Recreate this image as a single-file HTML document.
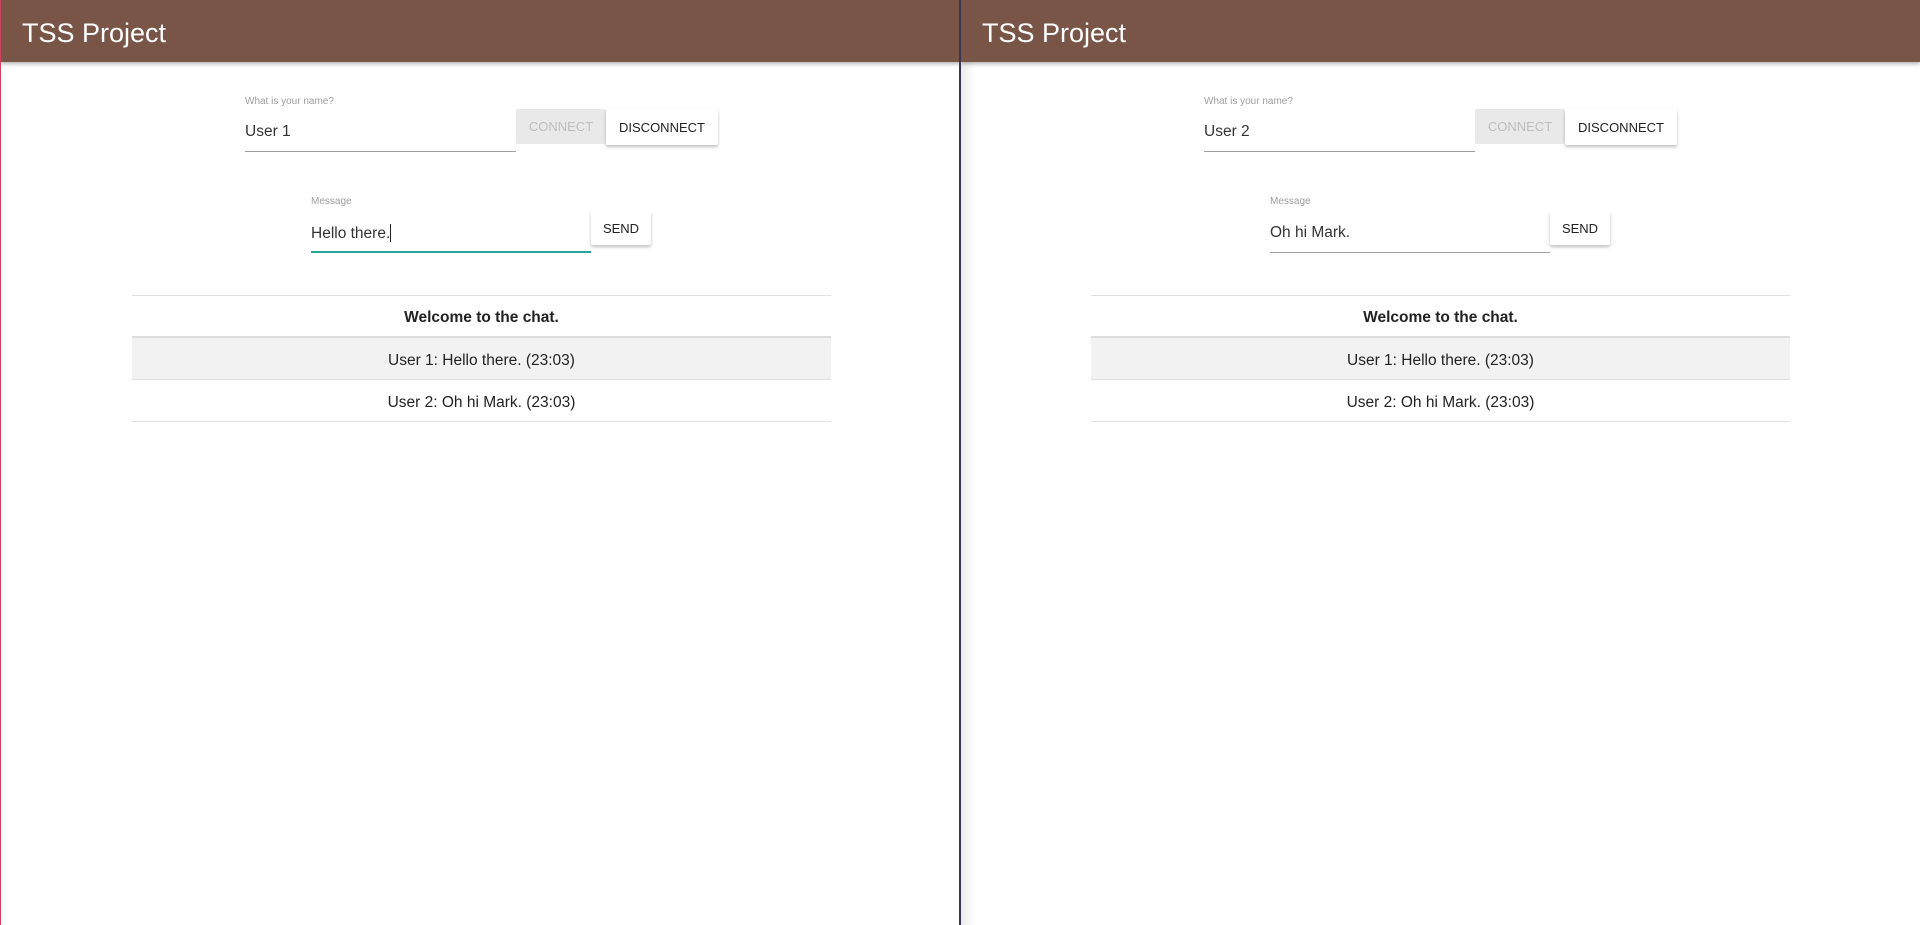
<!DOCTYPE html>
<html><head><meta charset="utf-8"><style>
*{margin:0;padding:0;box-sizing:border-box}
body{width:1920px;height:925px;overflow:hidden;background:#fff;font-family:"Liberation Sans",sans-serif;position:relative}
.panel{position:absolute;top:0;width:960px;height:925px;overflow:hidden;background:#fff}
.hdr{position:absolute;left:0;top:0;width:100%;height:62px;background:#795548;box-shadow:0 2px 4px rgba(0,0,0,.3)}
.hdr span{position:absolute;left:21px;top:18px;color:#fff;font-size:27px}
.lbl{position:absolute;font-size:10px;color:#9e9e9e}
.inp{position:absolute;font-size:15.5px;color:#333}
.line{position:absolute;height:1px;background:#9e9e9e}
.btn{position:absolute;font-size:13px;color:#222;background:#fff;border-radius:2px;box-shadow:0 2px 3px rgba(0,0,0,.25);text-align:center;display:flex;align-items:center;justify-content:center}
.tbl{position:absolute;left:131px;width:699px;top:295px;border-top:1px solid #e0e0e0}
.row{height:42px;display:flex;align-items:center;justify-content:center;font-size:15.5px;color:#222;border-bottom:1px solid #e0e0e0;padding-top:4px}
</style></head><body>
<div class="panel" style="left:0;border-left:1px solid #d04060">
 <div class="hdr"><span>TSS Project</span></div>
 <div class="lbl" style="left:244px;top:96px">What is your name?</div>
 <div class="inp" style="left:244px;top:123px">User 1</div>
 <div class="line" style="left:244px;top:151px;width:271px"></div>
 <div class="btn" style="left:515px;top:109px;width:90px;height:35px;background:#e9e9e9;box-shadow:none;color:#bdbdbd">CONNECT</div>
 <div class="btn" style="left:605px;top:109px;width:112px;height:36px">DISCONNECT</div>
 <div class="lbl" style="left:310px;top:196px">Message</div>
 <div class="inp" style="left:310px;top:224px">Hello there.<span style="display:inline-block;width:1px;height:18px;background:#222;vertical-align:-4px"></span></div>
 <div class="line" style="left:310px;top:251px;width:280px;height:2px;background:#26a69a"></div>
 <div class="btn" style="left:590px;top:211px;width:60px;height:34px">SEND</div>
 <div class="tbl">
  <div class="row" style="font-weight:bold;border-bottom:2px solid #ddd">Welcome to the chat.</div>
  <div class="row" style="background:#f2f2f2">User 1: Hello there. (23:03)</div>
  <div class="row">User 2: Oh hi Mark. (23:03)</div>
 </div>
</div>
<div style="position:absolute;left:959px;top:0;width:2px;height:925px;background:#3c3550;z-index:5"></div>
<div class="panel" style="left:961px;width:959px">
 <div class="hdr"><span>TSS Project</span></div>
 <div style="position:absolute;left:0;top:62px;width:14px;height:863px;background:linear-gradient(to right,rgba(0,0,0,.08),rgba(0,0,0,0))"></div>
 <div class="lbl" style="left:243px;top:96px">What is your name?</div>
 <div class="inp" style="left:243px;top:123px">User 2</div>
 <div class="line" style="left:243px;top:151px;width:271px"></div>
 <div class="btn" style="left:514px;top:109px;width:90px;height:35px;background:#e9e9e9;box-shadow:none;color:#bdbdbd">CONNECT</div>
 <div class="btn" style="left:604px;top:109px;width:112px;height:36px">DISCONNECT</div>
 <div class="lbl" style="left:309px;top:196px">Message</div>
 <div class="inp" style="left:309px;top:224px">Oh hi Mark.</div>
 <div class="line" style="left:309px;top:252px;width:280px"></div>
 <div class="btn" style="left:589px;top:211px;width:60px;height:34px">SEND</div>
 <div class="tbl" style="left:130px">
  <div class="row" style="font-weight:bold;border-bottom:2px solid #ddd">Welcome to the chat.</div>
  <div class="row" style="background:#f2f2f2">User 1: Hello there. (23:03)</div>
  <div class="row">User 2: Oh hi Mark. (23:03)</div>
 </div>
</div>
</body></html>
